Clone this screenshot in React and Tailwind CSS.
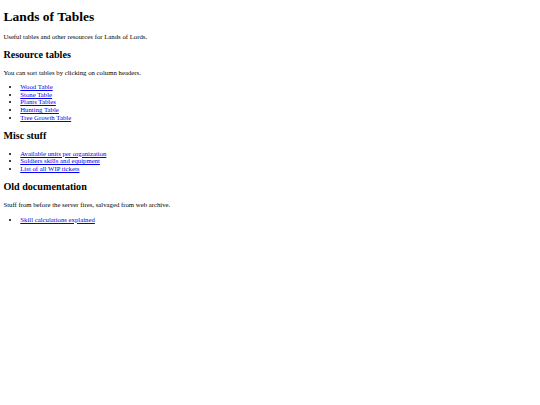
// Plain index page for the Lands of Tables resources
const sections = [
  {
    title: 'Resource tables',
    note: 'You can sort tables by clicking on column headers.',
    links: ['Wood Table', 'Stone Table', 'Plants Tables', 'Hunting Table', 'Tree Growth Table'],
  },
  {
    title: 'Misc stuff',
    links: ['Available units per organization', 'Soldiers skills and equipment', 'List of all WIP tickets'],
  },
  {
    title: 'Old documentation',
    note: 'Stuff from before the server fires, salvaged from web archive.',
    links: ['Skill calculations explained'],
  },
];

function LinkList({ links }) {
  return (
    <ul className="my-[6.75px] list-disc pl-[16.875px]">
      {links.map((name) => (
        <li key={name}>
          <a href="#" className="text-[#0000ee] underline">
            {name}
          </a>
        </li>
      ))}
    </ul>
  );
}

export default function App() {
  return (
    <div className="min-h-[405px] bg-white text-black">
      <div className="px-[3.375px] py-px font-['Liberation_Serif',serif] text-[6.75px] leading-[7.65px]">
        <h1 className="my-[8px] text-[13.5px] font-bold leading-[1.15]">Lands of Tables</h1>
        <p className="my-[6.75px]">Useful tables and other resources for Lands of Lords.</p>
        {sections.map((s) => (
          <section key={s.title}>
            <h2 className="my-[8.4px] text-[10.125px] font-bold leading-[1.15]">{s.title}</h2>
            {s.note && <p className="my-[6.75px]">{s.note}</p>}
            <LinkList links={s.links} />
          </section>
        ))}
      </div>
    </div>
  );
}
